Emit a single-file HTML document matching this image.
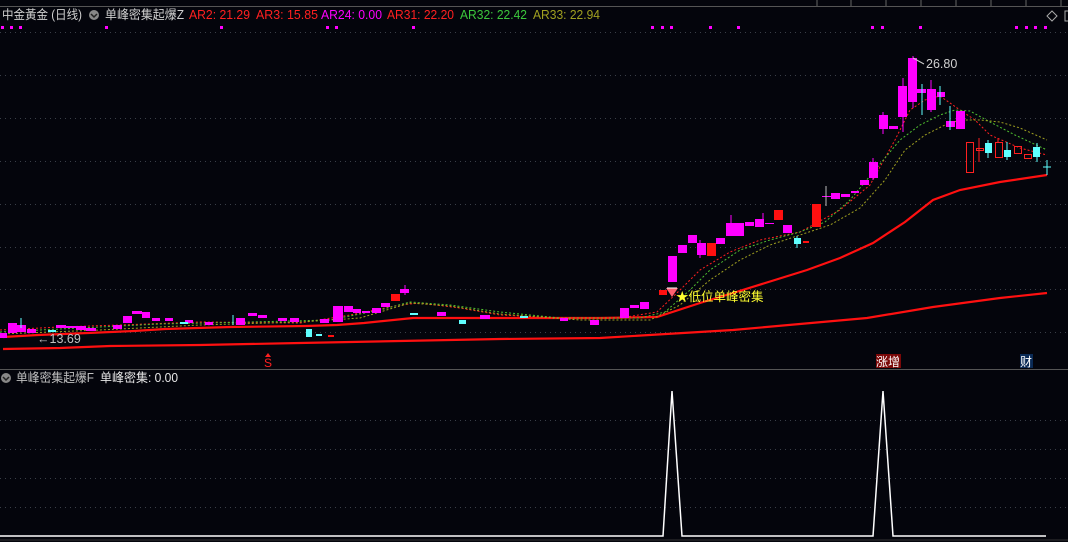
<!DOCTYPE html>
<html><head><meta charset="utf-8"><style>
html,body{margin:0;padding:0;background:#04050c;width:1068px;height:542px;overflow:hidden}
svg{display:block}
text{font-family:"Liberation Sans","Noto Sans CJK SC",sans-serif}
</style></head><body>
<svg width="1068" height="542" viewBox="0 0 1068 542" xmlns="http://www.w3.org/2000/svg">
<rect width="1068" height="542" fill="#04050c"/>
<!-- top bar -->
<line x1="0" y1="6.5" x2="1068" y2="6.5" stroke="#555" stroke-width="1"/>
<g stroke="#666"><line x1="817" y1="0" x2="817" y2="6"/><line x1="851" y1="0" x2="851" y2="6"/><line x1="886" y1="0" x2="886" y2="6"/><line x1="921" y1="0" x2="921" y2="6"/><line x1="956" y1="0" x2="956" y2="6"/><line x1="991" y1="0" x2="991" y2="6"/><line x1="1026" y1="0" x2="1026" y2="6"/><line x1="1061" y1="0" x2="1061" y2="6"/></g>
<!-- grid -->
<g stroke="#3a3f48" stroke-dasharray="1 4" stroke-width="1">
<line x1="0" y1="32.5" x2="1068" y2="32.5"/><line x1="0" y1="75.5" x2="1068" y2="75.5"/><line x1="0" y1="118.5" x2="1068" y2="118.5"/><line x1="0" y1="161.5" x2="1068" y2="161.5"/><line x1="0" y1="204.5" x2="1068" y2="204.5"/><line x1="0" y1="247.5" x2="1068" y2="247.5"/><line x1="0" y1="289.5" x2="1068" y2="289.5"/><line x1="0" y1="332.5" x2="1068" y2="332.5"/>
<line x1="0" y1="420.5" x2="1068" y2="420.5"/><line x1="0" y1="449.5" x2="1068" y2="449.5"/><line x1="0" y1="478.5" x2="1068" y2="478.5"/><line x1="0" y1="507.5" x2="1068" y2="507.5"/>
</g>
<!-- header -->
<text x="2" y="19" font-size="12.5" fill="#d0d0d0" textLength="80" lengthAdjust="spacingAndGlyphs">中金黃金 (日线)</text>
<circle cx="94" cy="15" r="5" fill="#888"/><path d="M91 14 L94 17 L97 14" stroke="#222" fill="none" stroke-width="1.5"/>
<text x="105" y="19" font-size="12.5" fill="#d0d0d0" textLength="79" lengthAdjust="spacingAndGlyphs">单峰密集起爆Z</text>
<text x="189" y="19" font-size="12.5" fill="#ff2020" textLength="61" lengthAdjust="spacingAndGlyphs">AR2: 21.29</text>
<text x="256" y="19" font-size="12.5" fill="#ff2020" textLength="62" lengthAdjust="spacingAndGlyphs">AR3: 15.85</text>
<text x="321" y="19" font-size="12.5" fill="#ff00ff" textLength="61" lengthAdjust="spacingAndGlyphs">AR24: 0.00</text>
<text x="387" y="19" font-size="12.5" fill="#ff2020" textLength="67" lengthAdjust="spacingAndGlyphs">AR31: 22.20</text>
<text x="460" y="19" font-size="12.5" fill="#3cc83c" textLength="67" lengthAdjust="spacingAndGlyphs">AR32: 22.42</text>
<text x="533" y="19" font-size="12.5" fill="#a0a020" textLength="67" lengthAdjust="spacingAndGlyphs">AR33: 22.94</text>
<path d="M1052 11 L1057 16 L1052 21 L1047 16 Z" stroke="#aaa" fill="none"/>
<path d="M1068 11 L1065 11 L1065 21 L1068 21" stroke="#aaa" fill="none"/>
<g fill="#ff00ff">
<rect x="1" y="26" width="3" height="3"/><rect x="10" y="26" width="3" height="3"/><rect x="19" y="26" width="3" height="3"/><rect x="105" y="26" width="3" height="3"/><rect x="220" y="26" width="3" height="3"/><rect x="326" y="26" width="3" height="3"/><rect x="335" y="26" width="3" height="3"/><rect x="412" y="26" width="3" height="3"/>
<rect x="651" y="26" width="3" height="3"/><rect x="661" y="26" width="3" height="3"/><rect x="670" y="26" width="3" height="3"/><rect x="709" y="26" width="3" height="3"/><rect x="737" y="26" width="3" height="3"/><rect x="871" y="26" width="3" height="3"/><rect x="881" y="26" width="3" height="3"/><rect x="919" y="26" width="3" height="3"/><rect x="1015" y="26" width="3" height="3"/><rect x="1025" y="26" width="3" height="3"/><rect x="1034" y="26" width="3" height="3"/><rect x="1044" y="26" width="3" height="3"/>
</g>
<!-- MA lines thick -->
<polyline fill="none" stroke="#ff1010" stroke-width="2.2" points="3,337 38,335 88,333 134,331 165,329 230,327 306,326 337,325 364,323 413,318 497,318 600,318 657,317 700,303 733,293 807,270 840,258 873,243 905,222 933,200 960,190 1000,182 1047,175"/>
<polyline fill="none" stroke="#ff1010" stroke-width="2.2" points="3,349 60,348 110,346 200,345 300,343 400,341 500,339 600,338 733,330 867,318 933,307 1000,298 1047,293"/>
<!-- dashed MAs -->
<polyline fill="none" stroke="#ff2020" stroke-dasharray="2 2" points="0,330 60,327 120,325 200,322 300,323 350,315 400,305 420,303 460,308 500,315 560,318 620,318 657,312 680,290 700,270 730,252 760,240 800,232 840,210 870,185 895,140 910,110 925,100 940,96 960,110 975,120 990,135 1020,148 1047,155"/>
<polyline fill="none" stroke="#50c030" stroke-dasharray="2 2" points="0,332 80,328 160,324 250,322 330,320 380,310 410,302 450,305 500,312 560,318 640,318 665,312 690,290 710,270 740,250 770,240 800,232 825,222 850,200 875,170 900,140 920,125 940,115 955,110 970,111 990,122 1015,135 1047,150"/>
<polyline fill="none" stroke="#a0a020" stroke-dasharray="2 2" points="0,334 100,330 200,325 300,322 360,318 410,303 450,306 500,314 580,320 650,320 680,305 710,280 740,260 770,245 800,235 830,225 860,208 885,180 905,150 925,135 945,125 960,120 980,120 1000,122 1020,128 1047,140"/>
<!-- candles -->
<g fill="#ff00ff">
<rect x="0" y="333" width="7" height="5"/><rect x="8" y="323" width="9" height="10"/><rect x="17" y="325" width="9" height="7"/><rect x="27" y="329" width="9" height="4"/><rect x="56" y="325" width="10" height="3"/><rect x="66" y="326" width="10" height="2"/><rect x="76" y="326" width="10" height="4"/><rect x="86" y="328" width="10" height="3"/><rect x="113" y="325" width="9" height="4"/><rect x="123" y="316" width="9" height="7"/><rect x="132" y="311" width="10" height="3"/><rect x="142" y="312" width="8" height="6"/><rect x="152" y="318" width="8" height="3"/><rect x="165" y="318" width="8" height="3"/><rect x="185" y="320" width="8" height="3"/><rect x="205" y="322" width="8" height="3"/><rect x="236" y="318" width="9" height="7"/><rect x="248" y="313" width="9" height="3"/><rect x="258" y="315" width="9" height="3"/><rect x="278" y="318" width="9" height="3"/>
<rect x="290" y="318" width="9" height="4"/><rect x="320" y="319" width="9" height="4"/><rect x="333" y="306" width="10" height="16"/><rect x="344" y="306" width="9" height="6"/><rect x="353" y="309" width="8" height="4"/><rect x="362" y="311" width="8" height="2"/><rect x="372" y="308" width="9" height="5"/><rect x="381" y="303" width="9" height="4"/><rect x="400" y="289" width="9" height="4"/><rect x="437" y="312" width="9" height="4"/><rect x="480" y="315" width="10" height="4"/><rect x="560" y="318" width="8" height="3"/><rect x="590" y="320" width="9" height="5"/><rect x="620" y="308" width="9" height="10"/><rect x="630" y="305" width="9" height="3"/><rect x="640" y="302" width="9" height="7"/>
<rect x="668" y="256" width="9" height="26"/><rect x="678" y="245" width="9" height="8"/><rect x="688" y="235" width="9" height="8"/><rect x="697" y="243" width="9" height="12"/><rect x="716" y="238" width="9" height="6"/><rect x="726" y="223" width="18" height="13"/><rect x="745" y="222" width="9" height="4"/><rect x="755" y="219" width="9" height="8"/><rect x="765" y="223" width="9" height="1"/><rect x="783" y="225" width="9" height="8"/><rect x="822" y="196" width="9" height="1"/><rect x="831" y="193" width="9" height="6"/><rect x="841" y="194" width="9" height="3"/><rect x="851" y="191" width="8" height="2"/><rect x="860" y="180" width="9" height="5"/><rect x="869" y="162" width="9" height="16"/><rect x="879" y="115" width="9" height="14"/><rect x="889" y="126" width="9" height="3"/><rect x="898" y="86" width="9" height="31"/><rect x="908" y="58" width="9" height="44"/><rect x="917" y="89" width="9" height="4"/><rect x="927" y="89" width="9" height="21"/><rect x="937" y="92" width="8" height="5"/><rect x="946" y="121" width="9" height="6"/><rect x="956" y="111" width="9" height="18"/>
</g>
<g stroke="#ff00ff" stroke-width="1"><line x1="903" y1="78" x2="903" y2="132"/><line x1="913" y1="56" x2="913" y2="108"/><line x1="931" y1="80" x2="931" y2="112"/><line x1="883" y1="112" x2="883" y2="134"/><line x1="873" y1="158" x2="873" y2="180"/><line x1="700" y1="240" x2="700" y2="258"/><line x1="731" y1="215" x2="731" y2="236"/><line x1="763" y1="213" x2="763" y2="227"/><line x1="405" y1="285" x2="405" y2="295"/></g>
<g stroke="#60ffff" stroke-width="1"><line x1="922" y1="84" x2="922" y2="115"/><line x1="950" y1="106" x2="950" y2="130"/><line x1="940" y1="86" x2="940" y2="105"/><line x1="988" y1="140" x2="988" y2="158"/><line x1="1007" y1="142" x2="1007" y2="160"/><line x1="1037" y1="143" x2="1037" y2="162"/><line x1="1047" y1="160" x2="1047" y2="175"/><line x1="1043" y1="167" x2="1051" y2="167"/><line x1="797" y1="236" x2="797" y2="248"/><line x1="21" y1="318" x2="21" y2="328"/><line x1="233" y1="315" x2="233" y2="325"/></g>
<line x1="826" y1="186" x2="826" y2="206" stroke="#bbb"/>
<g fill="#60ffff">
<rect x="985" y="143" width="7" height="10"/><rect x="1004" y="150" width="7" height="7"/><rect x="1033" y="147" width="7" height="10"/><rect x="794" y="238" width="7" height="6"/><rect x="306" y="329" width="6" height="8"/><rect x="459" y="320" width="7" height="4"/><rect x="410" y="313" width="8" height="2"/><rect x="520" y="316" width="8" height="2"/><rect x="48" y="330" width="8" height="2"/><rect x="180" y="322" width="8" height="2"/><rect x="316" y="334" width="6" height="2"/>
</g>
<g fill="#ff1010">
<rect x="391" y="294" width="9" height="7"/><rect x="707" y="243" width="9" height="13"/><rect x="774" y="210" width="9" height="10"/><rect x="812" y="204" width="9" height="23"/><rect x="659" y="290" width="8" height="5"/><rect x="803" y="241" width="6" height="2"/><rect x="328" y="335" width="6" height="2"/>
</g>
<g fill="none" stroke="#ff2020" stroke-width="1"><rect x="966.5" y="142.5" width="7" height="30"/><rect x="976.5" y="148.5" width="7" height="2"/><rect x="995.5" y="142.5" width="7" height="15"/><rect x="1014.5" y="146.5" width="7" height="7"/><rect x="1024.5" y="154.5" width="7" height="4"/><line x1="979" y1="138" x2="979" y2="162"/><line x1="998" y1="138" x2="998" y2="142"/></g>
<!-- labels -->
<path d="M913 58 L924 64" stroke="#ccc"/>
<text x="926" y="68" font-size="12.5" fill="#d0d0d0">26.80</text>
<text x="37" y="343" font-size="12.5" fill="#c0c0c0">←13.69</text>
<path d="M666 288 L678 288 L672 297 Z" fill="#ff6070"/><path d="M667 288 L677 288" stroke="#fff"/>
<text x="676" y="301" font-size="12.5" fill="#ffff30">★低位单峰密集</text>
<text x="264" y="367" font-size="12" fill="#ff2020">S</text><path d="M265 357 L268 353 L271 357 Z" fill="#ff2020"/>
<rect x="876" y="354" width="25" height="14" fill="#7a0808"/>
<text x="876" y="366" font-size="12" fill="#fff">涨增</text>
<rect x="1020" y="354" width="13" height="14" fill="#0a2a55"/>
<text x="1020" y="366" font-size="12" fill="#fff">财</text>
<!-- separator -->
<line x1="0" y1="369.5" x2="1068" y2="369.5" stroke="#555"/>
<circle cx="6" cy="378" r="5" fill="#888"/><path d="M3 377 L6 380 L9 377" stroke="#222" fill="none" stroke-width="1.5"/>
<text x="16" y="382" font-size="12.5" fill="#c0c0c0" textLength="78" lengthAdjust="spacingAndGlyphs">单峰密集起爆F</text>
<text x="100" y="382" font-size="12.5" fill="#e8e8e8" textLength="78" lengthAdjust="spacingAndGlyphs">单峰密集: 0.00</text>
<polyline fill="none" stroke="#fff" stroke-width="1.5" points="0,536 663,536 672,391 682,536 873,536 883,391 893,536 1046,536"/>
<line x1="0" y1="540" x2="1068" y2="540" stroke="#333"/>
</svg>
</body></html>
